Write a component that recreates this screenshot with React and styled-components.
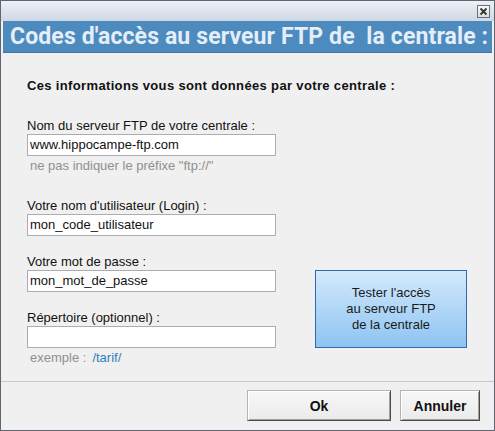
import React from 'react';
import styled, { createGlobalStyle } from 'styled-components';

const GlobalStyle = createGlobalStyle`
  html, body {
    margin: 0;
    padding: 0;
    background: #f0f0f0;
  }
  * {
    box-sizing: border-box;
  }
`;

const Window = styled.div`
  width: 495px;
  height: 431px;
  display: flex;
  flex-direction: column;
  background: #f0f0f0;
  border: 1px solid #5f6670;
  font-family: 'Liberation Sans', Arial, sans-serif;
  font-size: 13px;
  color: #111;
`;

const TitleBar = styled.div`
  height: 20px;
  display: flex;
  justify-content: flex-end;
  align-items: flex-start;
  padding: 4px 4px 0 0;
  background: linear-gradient(to bottom, #eef1f6, #cfd8e4);
`;

const CloseBox = styled.div`
  width: 13px;
  height: 13px;
  border: 1px solid #6a6f78;
  background: linear-gradient(to bottom, #fafafa, #dcdcdc);
  display: flex;
  align-items: center;
  justify-content: center;
`;

const Header = styled.div`
  margin: 0 2px;
  height: 32px;
  background: #4d8bbf;
  border-bottom: 1px solid #3f76a6;
  display: flex;
  align-items: center;
  padding-left: 7px;
  white-space: pre;
  font-family: Roboto, 'Liberation Sans', sans-serif;
  font-weight: bold;
  font-size: 23px;
  letter-spacing: 0.12px;
  color: #e3eef8;
  overflow: hidden;
`;

const Body = styled.div`
  flex: 1;
  padding: 25px 0 0 26px;
`;

const Intro = styled.div`
  font-weight: bold;
  line-height: 16px;
  letter-spacing: 0.35px;
  margin-bottom: 24px;
`;

const Columns = styled.div`
  display: flex;
  align-items: flex-start;
  gap: 39px;
`;

const Form = styled.div`
  width: 249px;
  display: flex;
  flex-direction: column;
  gap: 18px;
`;

const Field = styled.div`
  display: flex;
  flex-direction: column;
`;

const Label = styled.div`
  line-height: 16px;
`;

const Input = styled.div`
  height: 22px;
  border: 1px solid #abadb3;
  background: #fff;
  padding: 0 2px;
  line-height: 20px;
`;

const Hint = styled.div`
  line-height: 14px;
  margin: 3px 0 ${(p) => (p.$spaced ? '7px' : '0')} 3px;
  color: #8f8f8f;
`;

const Link = styled.span`
  color: #2f7fbf;
  margin-left: 6px;
`;

const TestButton = styled.div`
  margin-top: 152px;
  width: 152px;
  height: 78px;
  border: 1px solid #2d6aaf;
  background: linear-gradient(to bottom, #d3e9fc, #8ec4f2);
  display: flex;
  align-items: center;
  justify-content: center;
  text-align: center;
  line-height: 16px;
  color: #1a1a1a;
`;

const Footer = styled.div`
  height: 49px;
  border-top: 1px solid #c9c9c9;
  display: flex;
  justify-content: flex-end;
  align-items: flex-start;
  gap: 9px;
  padding: 8px 14px 0 0;
`;

const Button = styled.div`
  width: ${(p) => p.$w}px;
  height: 31px;
  border: 1px solid;
  border-color: #b4b4b4 #4a4a4a #4a4a4a #b4b4b4;
  box-shadow: inset 1px 1px 0 #ffffff, inset -1px -1px 0 #a0a0a0;
  background: linear-gradient(to bottom, #f7f7f7, #ebebeb);
  display: flex;
  align-items: center;
  justify-content: center;
  font-weight: bold;
  font-size: 14px;
  color: #111;
`;

export default function App() {
  return (
    <>
      <GlobalStyle />
      <Window>
        <TitleBar>
          <CloseBox>
            <svg width="9" height="9" viewBox="0 0 9 9">
              <path d="M1.5 1.5 L7.5 7.5 M7.5 1.5 L1.5 7.5" stroke="#333" strokeWidth="1.8" />
            </svg>
          </CloseBox>
        </TitleBar>
        <Header>{"Codes d'accès au serveur FTP de  la centrale :"}</Header>
        <Body>
          <Intro>Ces informations vous sont données par votre centrale :</Intro>
          <Columns>
            <Form>
              <Field>
                <Label>Nom du serveur FTP de votre centrale :</Label>
                <Input>www.hippocampe-ftp.com</Input>
                <Hint $spaced>ne pas indiquer le préfixe "ftp://"</Hint>
              </Field>
              <Field>
                <Label>Votre nom d'utilisateur (Login) :</Label>
                <Input>mon_code_utilisateur</Input>
              </Field>
              <Field>
                <Label>Votre mot de passe :</Label>
                <Input>mon_mot_de_passe</Input>
              </Field>
              <Field>
                <Label>Répertoire (optionnel) :</Label>
                <Input />
                <Hint>
                  exemple :<Link>/tarif/</Link>
                </Hint>
              </Field>
            </Form>
            <TestButton>
              Tester l'accès
              <br />
              au serveur FTP
              <br />
              de la centrale
            </TestButton>
          </Columns>
        </Body>
        <Footer>
          <Button $w={144}>Ok</Button>
          <Button $w={80}>Annuler</Button>
        </Footer>
      </Window>
    </>
  );
}
